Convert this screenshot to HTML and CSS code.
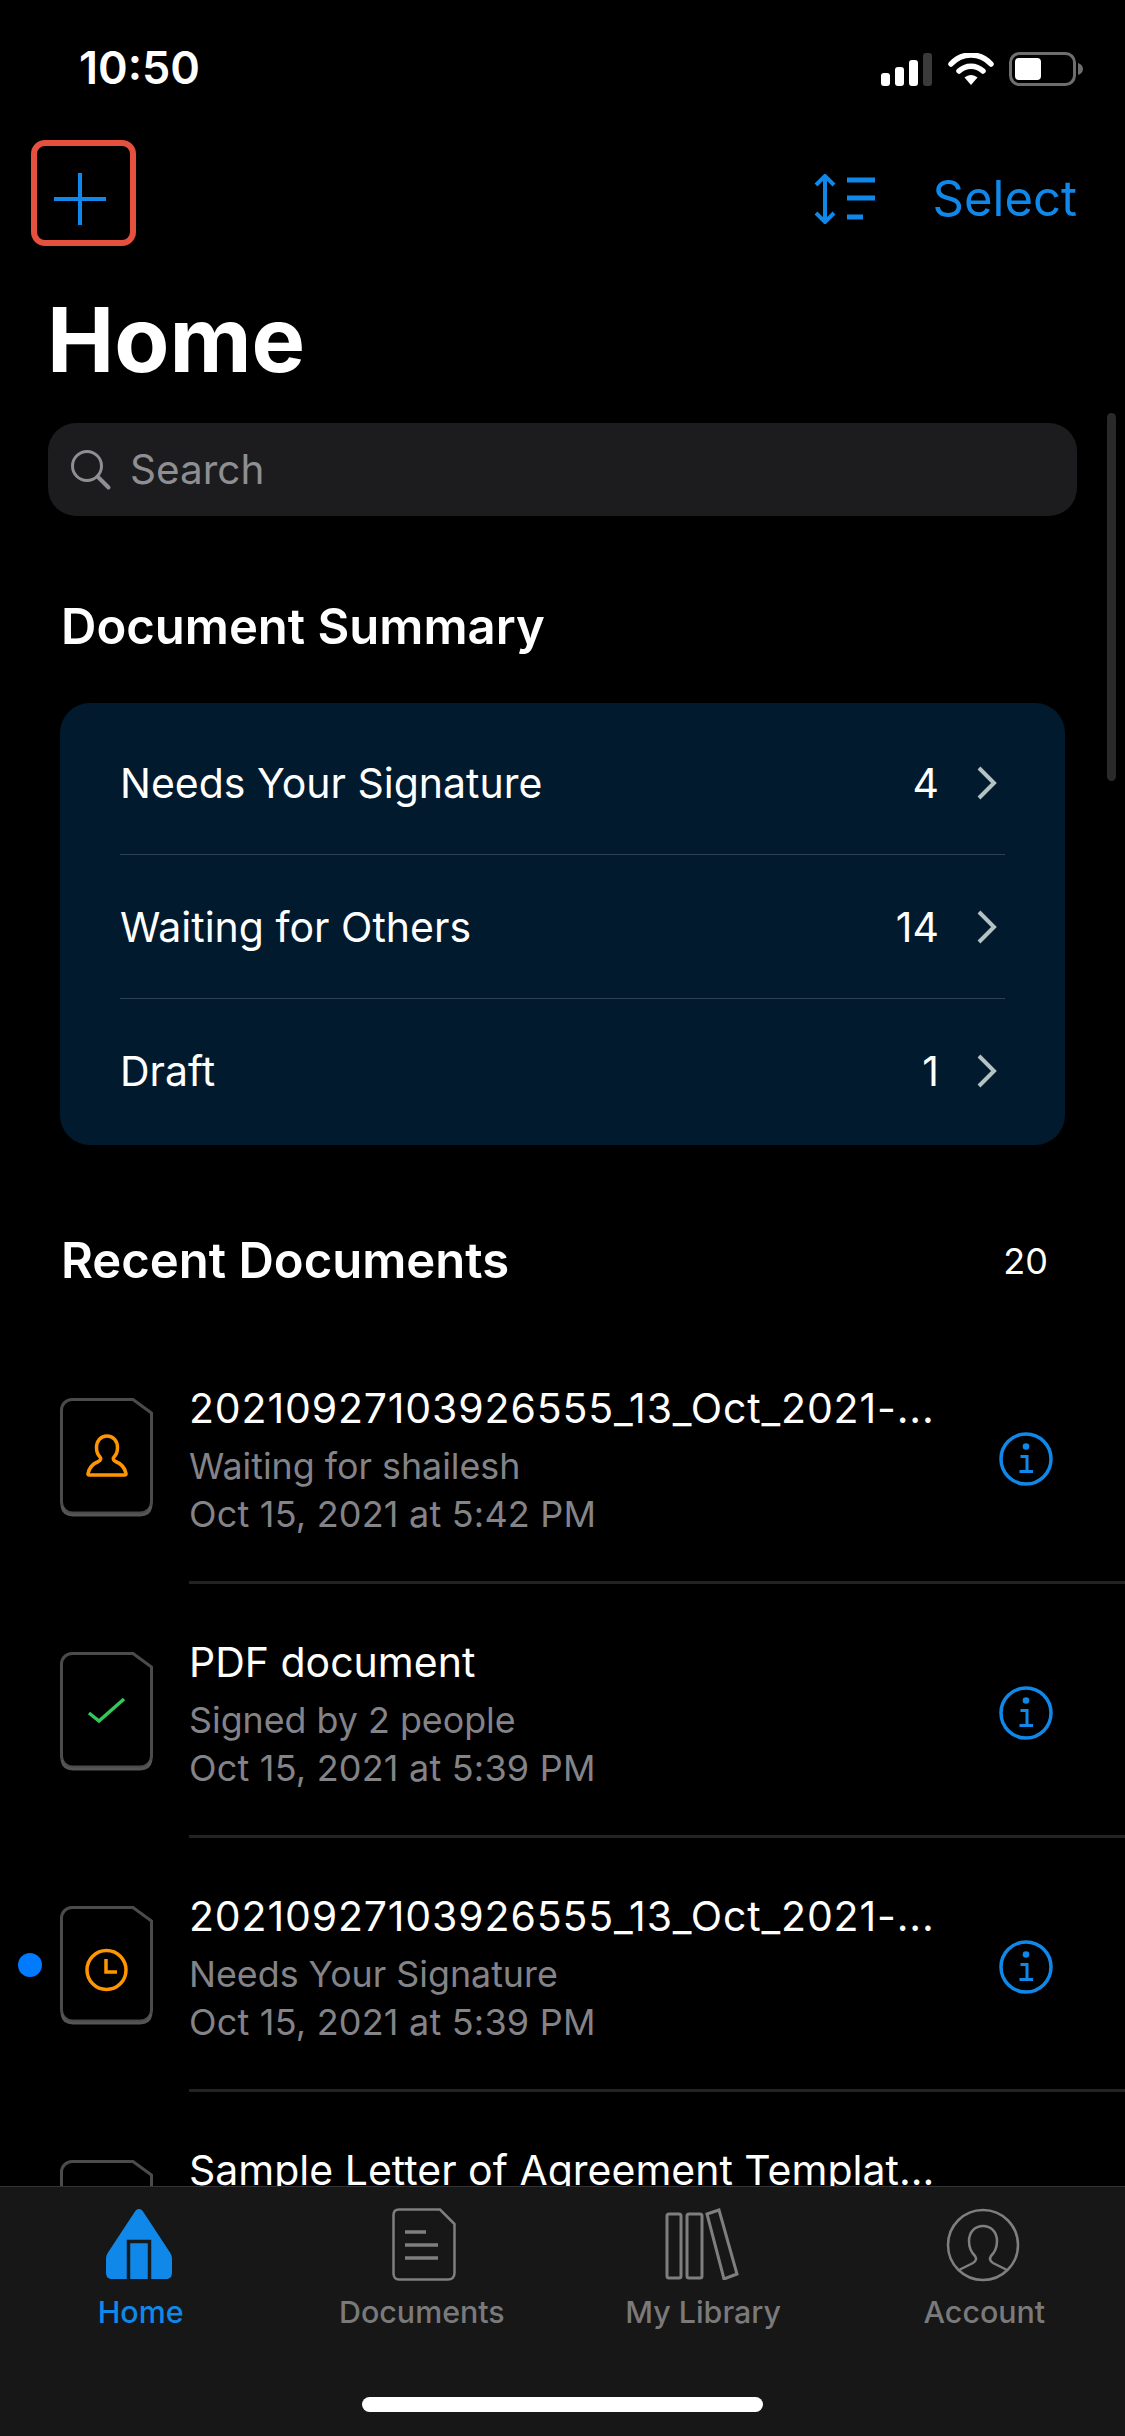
FILE: index.html
```html
<!DOCTYPE html>
<html lang="en">
<head>
<meta charset="utf-8">
<title>Home</title>
<link rel="stylesheet" href="styles.css">
</head>
<body>
<div class="app">
  <header class="status">
    <span class="time">10:50</span>
    <div class="status-icons">
      <svg class="signal" width="52" height="33" viewBox="0 0 52 33"><rect x="0" y="20" width="9" height="13" rx="3" fill="#fff"/><rect x="14" y="14" width="9" height="19" rx="3" fill="#fff"/><rect x="28" y="7" width="9" height="26" rx="3" fill="#fff"/><rect x="42" y="0" width="9" height="33" rx="3" fill="#3a3a3a"/></svg>
      <svg class="wifi" width="46" height="33" viewBox="0 0 46 33"><path d="M3 11C14-1 32-1 43 11" fill="none" stroke="#fff" stroke-width="5.5" stroke-linecap="round"/><path d="M11 18c7-6.500 17-6.500 24 0" fill="none" stroke="#fff" stroke-width="5.500" stroke-linecap="round"/><path d="M16.500 24.500c4-3.500 9-3.500 13 0L23 32z" fill="#fff"/></svg>
      <svg class="battery" width="74" height="34" viewBox="0 0 74 34"><rect x="1.500" y="1.500" width="64" height="31" rx="9" fill="none" stroke="#6e6e6e" stroke-width="3"/><rect x="6" y="6" width="26" height="22" rx="4" fill="#fff"/><path d="M69 11c3 1 5 3 5 6s-2 5-5 6z" fill="#6e6e6e"/></svg>
    </div>
  </header>

  <nav class="nav">
    <div class="add-box">
      <svg width="52" height="52" viewBox="0 0 52 52"><path d="M26 0v52M0 26h52" stroke="#1088ea" stroke-width="4" stroke-linecap="round"/></svg>
    </div>
    <div class="nav-right">
      <svg class="sort" width="62" height="50" viewBox="0 0 62 50"><path d="M11 2v46M2 11l9-9 9 9M2 39l9 9 9-9" fill="none" stroke="#1088ea" stroke-width="4"/><path d="M33 6h28M33 24h28M33 43h16" stroke="#1088ea" stroke-width="5"/></svg>
      <span class="select">Select</span>
    </div>
  </nav>

  <h1 class="title">Home</h1>

  <div class="search">
    <svg width="42" height="42" viewBox="0 0 42 42"><circle cx="17" cy="17" r="14.500" fill="none" stroke="#8e8e93" stroke-width="3"/><path d="M27.500 27.500l11 11" stroke="#8e8e93" stroke-width="4" stroke-linecap="round"/></svg>
    <span>Search</span>
  </div>

  <main class="content">
    <h2 class="section-title summary-title">Document Summary</h2>
    <section class="card">
      <div class="card-row">
        <span class="card-label">Needs Your Signature</span>
        <span class="card-count">4</span>
        <svg class="chev" width="20" height="34" viewBox="0 0 20 34"><path d="M2 2l15 15L2 32" fill="none" stroke="#b4c2c4" stroke-width="4"/></svg>
      </div>
      <div class="card-row">
        <span class="card-label">Waiting for Others</span>
        <span class="card-count">14</span>
        <svg class="chev" width="20" height="34" viewBox="0 0 20 34"><path d="M2 2l15 15L2 32" fill="none" stroke="#b4c2c4" stroke-width="4"/></svg>
      </div>
      <div class="card-row">
        <span class="card-label">Draft</span>
        <span class="card-count">1</span>
        <svg class="chev" width="20" height="34" viewBox="0 0 20 34"><path d="M2 2l15 15L2 32" fill="none" stroke="#b4c2c4" stroke-width="4"/></svg>
      </div>
    </section>

    <div class="recent-head">
      <h2 class="section-title">Recent Documents</h2>
      <span class="recent-count">20</span>
    </div>

    <div class="doc">
      <svg class="doc-icon" width="93" height="120" viewBox="0 -1 93 120">
        <path d="M12 1.500H73L91.500 15V104a11 11 0 0 1-11 11H12.500a11 11 0 0 1-11-11V12A10.500 10.500 0 0 1 12 1.500z" fill="none" stroke="#4b4b4b" stroke-width="3"/>
        <path d="M2 108c1 6 5 9 11 9h67c6 0 10-3 11-9" fill="none" stroke="#555" stroke-width="3"/>
        <path d="M47 38c-6.500 0-10.500 5-10.500 11.500 0 4 1.500 7.500 3.500 9.500 1.500 1.500 .5 3.500-1.500 4.500-4 1.500-9 5-10.500 12-.2 1 .3 1.500 1.300 1.500h35.400c1 0 1.500-.5 1.300-1.500-1.500-7-6.500-10.500-10.500-12-2-1-3-3-1.500-4.500 2-2 3.500-5.500 3.500-9.500 0-6.500-4-11.500-10.500-11.500z" fill="none" stroke="#ff9500" stroke-width="3.500"/>
      </svg>
      <div class="doc-text">
        <div class="doc-name doc-name-digits">20210927103926555_13_Oct_2021-...</div>
        <div class="doc-status">Waiting for shailesh</div>
        <div class="doc-date">Oct 15, 2021 at 5:42 PM</div>
      </div>
      <svg class="info" width="54" height="54" viewBox="0 0 54 54"><circle cx="27" cy="27" r="25" fill="none" stroke="#1088ea" stroke-width="3.500"/><circle cx="27" cy="14.500" r="3.300" fill="#1088ea"/><path d="M21.500 24.500h6.500v15M20.500 39.500h13.500" fill="none" stroke="#1088ea" stroke-width="3"/></svg>
    </div>

    <div class="doc">
      <svg class="doc-icon" width="93" height="120" viewBox="0 -1 93 120">
        <path d="M12 1.500H73L91.500 15V104a11 11 0 0 1-11 11H12.500a11 11 0 0 1-11-11V12A10.500 10.500 0 0 1 12 1.500z" fill="none" stroke="#4b4b4b" stroke-width="3"/>
        <path d="M2 108c1 6 5 9 11 9h67c6 0 10-3 11-9" fill="none" stroke="#555" stroke-width="3"/>
        <path d="M29 61l10 8 25-22" fill="none" stroke="#34c759" stroke-width="3.500"/>
      </svg>
      <div class="doc-text">
        <div class="doc-name">PDF document</div>
        <div class="doc-status">Signed by 2 people</div>
        <div class="doc-date">Oct 15, 2021 at 5:39 PM</div>
      </div>
      <svg class="info" width="54" height="54" viewBox="0 0 54 54"><circle cx="27" cy="27" r="25" fill="none" stroke="#1088ea" stroke-width="3.500"/><circle cx="27" cy="14.500" r="3.300" fill="#1088ea"/><path d="M21.500 24.500h6.500v15M20.500 39.500h13.500" fill="none" stroke="#1088ea" stroke-width="3"/></svg>
    </div>

    <div class="doc">
      <span class="dot"></span>
      <svg class="doc-icon" width="93" height="120" viewBox="0 -1 93 120">
        <path d="M12 1.500H73L91.500 15V104a11 11 0 0 1-11 11H12.500a11 11 0 0 1-11-11V12A10.500 10.500 0 0 1 12 1.500z" fill="none" stroke="#4b4b4b" stroke-width="3"/>
        <path d="M2 108c1 6 5 9 11 9h67c6 0 10-3 11-9" fill="none" stroke="#555" stroke-width="3"/>
        <circle cx="46.500" cy="64" r="19.500" fill="none" stroke="#ff9500" stroke-width="3.500"/>
        <path d="M46 53v13h11" fill="none" stroke="#ff9500" stroke-width="3.500"/>
      </svg>
      <div class="doc-text">
        <div class="doc-name doc-name-digits">20210927103926555_13_Oct_2021-...</div>
        <div class="doc-status">Needs Your Signature</div>
        <div class="doc-date">Oct 15, 2021 at 5:39 PM</div>
      </div>
      <svg class="info" width="54" height="54" viewBox="0 0 54 54"><circle cx="27" cy="27" r="25" fill="none" stroke="#1088ea" stroke-width="3.500"/><circle cx="27" cy="14.500" r="3.300" fill="#1088ea"/><path d="M21.500 24.500h6.500v15M20.500 39.500h13.500" fill="none" stroke="#1088ea" stroke-width="3"/></svg>
    </div>

    <div class="doc">
      <svg class="doc-icon" width="93" height="120" viewBox="0 -1 93 120">
        <path d="M12 1.500H73L91.500 15V104a11 11 0 0 1-11 11H12.500a11 11 0 0 1-11-11V12A10.500 10.500 0 0 1 12 1.500z" fill="none" stroke="#4b4b4b" stroke-width="3"/>
      </svg>
      <div class="doc-text">
        <div class="doc-name">Sample Letter of Agreement Templat...</div>
      </div>
    </div>
  </main>

  <div class="scrollbar"></div>

  <footer class="tabbar">
    <div class="tabs">
      <div class="tab tab-active">
        <svg class="tab-icon-home" width="66" height="72" viewBox="0 0 66 72"><path d="M33 1c2 0 3 1 4 2.500L63 43c2 3 3 5 3 8v13c0 5-2 7-6 7H6c-4 0-6-2-6-7V51c0-3 1-5 3-8L29 3.500C30 2 31 1 33 1z" fill="#1088ea"/><path d="M22.500 71V33.500h21V71" fill="none" stroke="#171a1d" stroke-width="3.500"/></svg>
        <span>Home</span>
      </div>
      <div class="tab">
        <svg class="tab-icon-docs" width="64" height="73" viewBox="0 0 64 73"><path d="M7 1.500H48L62.500 16V65c0 4-2.500 6.500-6.500 6.500H7c-3.500 0-5.500-2.500-5.500-6V7C1.500 3.500 3.500 1.500 7 1.500z" fill="none" stroke="#7f7f7f" stroke-width="2.500"/><path d="M13 24h21M13 37h33M13 50h33" stroke="#7f7f7f" stroke-width="3.500"/></svg>
        <span>Documents</span>
      </div>
      <div class="tab">
        <svg class="tab-icon-lib" width="74" height="72" viewBox="0 0 74 72"><rect x="2" y="6" width="14" height="64" rx="2" fill="none" stroke="#7f7f7f" stroke-width="3"/><rect x="22" y="6" width="15" height="64" rx="2" fill="none" stroke="#7f7f7f" stroke-width="3"/><path d="M42 6l12-4 18 64-13 5z" fill="none" stroke="#7f7f7f" stroke-width="3"/></svg>
        <span>My Library</span>
      </div>
      <div class="tab">
        <svg class="tab-icon-acct" width="74" height="74" viewBox="0 0 74 74"><circle cx="37" cy="37" r="35" fill="none" stroke="#7f7f7f" stroke-width="2.500"/><path d="M13 62l14-7c3-2 4-4 2-7-4-4-6-9-6-15 0-9 6-15 14-15s14 6 14 15c0 6-2 11-6 15-2 3-1 5 2 7l14 7" fill="none" stroke="#7f7f7f" stroke-width="2.500"/></svg>
        <span>Account</span>
      </div>
    </div>
    <div class="home-indicator"></div>
  </footer>
</div>
</body>
</html>
```

FILE: styles.css
```css
* {
  box-sizing: border-box;
}

html,
body {
  margin: 0;
  padding: 0;
  background: #000;
}

.app {
  position: relative;
  width: 1125px;
  height: 2436px;
  display: flex;
  flex-direction: column;
  overflow: hidden;
  background: #000;
  color: #fff;
  font-family: Inter, "Liberation Sans", sans-serif;
}

.status {
  height: 136px;
  flex: none;
  display: flex;
  justify-content: space-between;
  align-items: flex-start;
  padding: 40px 42px 0 79px;
}

.time {
  font-size: 45px;
  line-height: 56px;
  font-weight: 600;
}

.status-icons {
  display: flex;
  align-items: center;
  gap: 15px;
  padding-top: 12px;
}

.nav {
  height: 114px;
  flex: none;
  display: flex;
  justify-content: space-between;
  align-items: center;
  padding: 0 48px 0 31px;
}

.add-box {
  width: 105px;
  height: 106px;
  border: 6px solid #e5503f;
  border-radius: 14px;
  display: flex;
  align-items: center;
  justify-content: center;
  padding: 12px 8px 0 0;
}

.nav-right {
  display: flex;
  align-items: center;
  gap: 57px;
  padding-top: 12px;
}

.select {
  color: #1088ea;
  font-size: 49px;
  line-height: 60px;
}

.title {
  margin: 0;
  flex: none;
  height: 173px;
  padding: 35px 0 0 47px;
  font-size: 90px;
  line-height: 110px;
  font-weight: 700;
}

.search {
  flex: none;
  height: 93px;
  margin: 0 48px;
  padding-left: 22px;
  display: flex;
  align-items: center;
  gap: 18px;
  background: #1c1c1e;
  border-radius: 28px;
  color: #8e8e93;
  font-size: 40.500px;
}

.content {
  flex: 1;
  min-height: 0;
  overflow: hidden;
}

.section-title {
  margin: 0;
  font-size: 49px;
  line-height: 60px;
  font-weight: 600;
}

.summary-title {
  padding: 81px 0 0 61px;
}

.card {
  margin: 46px 60px 0;
  padding: 8px 60px 2px;
  background: #011a2e;
  border-radius: 30px;
}

.card-row {
  height: 144px;
  display: flex;
  align-items: center;
  border-bottom: 1px solid #2c4152;
  font-size: 41px;
}

.card-row:last-child {
  border-bottom: 0;
}

.card-label {
  flex: 1;
}

.card-count {
  margin-right: 38px;
}

.chev {
  margin-right: 8px;
}

.recent-head {
  display: flex;
  justify-content: space-between;
  align-items: center;
  padding: 86px 77px 0 61px;
}

.recent-count {
  font-size: 36px;
}

.doc {
  position: relative;
  height: 254px;
  display: flex;
  align-items: center;
  padding-left: 60px;
}

.recent-head + .doc {
  margin-top: 39px;
}

.doc-icon {
  flex: none;
  margin-right: 36px;
}

.doc-text {
  flex: 1;
  align-self: stretch;
  display: flex;
  flex-direction: column;
  justify-content: center;
  border-bottom: 3px solid #232323;
  padding-top: 5px;
}

.doc:last-child .doc-text {
  border-bottom: 0;
  justify-content: flex-start;
  padding-top: 48px;
}

.doc-name {
  font-size: 41px;
  line-height: 60px;
  margin-bottom: 4px;
  white-space: nowrap;
}

.doc-name-digits {
  letter-spacing: 0.850px;
}

.doc-status,
.doc-date {
  color: #838388;
  font-size: 36px;
  line-height: 48px;
}

.doc-status {
  font-size: 35.800px;
}

.doc-date {
  letter-spacing: 0.200px;
}

.info {
  position: absolute;
  right: 72px;
  top: 102px;
}

.dot {
  position: absolute;
  left: 18px;
  top: 115px;
  width: 24px;
  height: 24px;
  border-radius: 50%;
  background: #007aff;
}

.scrollbar {
  position: absolute;
  left: 1107px;
  top: 413px;
  width: 9px;
  height: 368px;
  border-radius: 5px;
  background: #2a2a2a;
}

.tabbar {
  flex: none;
  height: 250px;
  position: relative;
  background: #171717;
  border-top: 1px solid #333;
}

.tabs {
  display: grid;
  grid-template-columns: repeat(4, 1fr);
  padding-top: 21px;
}

.tab {
  height: 124px;
  display: flex;
  flex-direction: column;
  align-items: center;
  justify-content: space-between;
  color: #7a7a7a;
  font-size: 30.400px;
  line-height: 40px;
  font-weight: 500;
}

.tab-active {
  color: #1088ea;
}

.tab-icon-home {
  margin-right: 3px;
}

.tab-icon-docs {
  margin-left: 4px;
}

.tab-icon-lib,
.tab-icon-acct {
  margin-right: 2px;
}

.home-indicator {
  position: absolute;
  left: 362px;
  bottom: 24px;
  width: 401px;
  height: 15px;
  border-radius: 8px;
  background: #fff;
}
```
